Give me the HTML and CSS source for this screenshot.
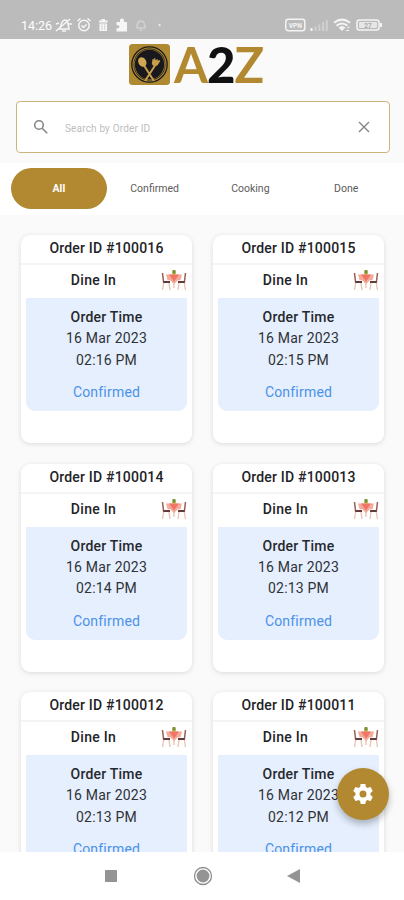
FILE: index.html
```html
<!DOCTYPE html>
<html lang="en">
<head>
<meta charset="utf-8">
<title>A2Z Orders</title>
<link rel="stylesheet" href="styles.css">
</head>
<body>
<svg class="defs" width="0" height="0">
  <symbol id="table" viewBox="0 0 26 22">
    <path d="M1.500 4l1.200 10M24.500 4l-1.200 10" stroke="#995f55" stroke-width="1.500" fill="none"/>
    <path d="M2.500 13h6.500M17 13h6.500" stroke="#633b37" stroke-width="2"/>
    <path d="M2.700 14L1.500 21M8 14l1 7M18 14l-1 7M23.300 14l1.200 7M13 13v6" stroke="#e8c3ae" stroke-width="1.300" fill="none"/>
    <path d="M5 5.500h16l-1.500 5.500-3 .5-3.500 3.500-3.500-3.500-3-.5z" fill="#f4aa98"/>
    <path d="M8 5.500h10l-5 7z" fill="#ef7567"/>
    <rect x="11.300" y="1" width="3.400" height="4.200" rx="1" fill="#7d9135"/>
    <path d="M11.500 5.200h3" stroke="#e2a13c" stroke-width="1.200"/>
  </symbol>
</svg>
<div class="phone">
  <header class="status">
    <span class="clock">14:26</span>
    <svg class="sys-left" width="110" height="18" viewBox="0 0 110 18" fill="none" stroke="#f6f6f6" stroke-width="1.500">
      <path d="M4 13c3-2 1-8 6-9 3 0 3 4 4 9zM7 15h4M1 15L15 3M1 8l3-1M13 8h4"/>
      <circle cx="29" cy="9.500" r="5.200"/><path d="M22.500 5l3-2.500M35.500 5l-3-2.500M26.500 9.500l2 2 3-3"/>
      <path d="M44 5.500h8.500M46.500 4h3.500" stroke-width="1.800"/><path d="M44.500 7.500h7.500v7.500h-7.500z" fill="#f6f6f6" stroke="none"/><path d="M47 8v6M49.700 8v6" stroke="#bbb" stroke-width=".6"/>
      <path d="M61.500 6h3.500q-.5-3.500 2-3.500t2 3.500h3v9.500h-10.500v-3q3-.2 3-1.800t-3-1.800z" fill="#f6f6f6" stroke="none"/>
      <path d="M82 12c0-5 1-7 4-7s4 2 4 7z" stroke="#d2d2d2"/><path d="M84.500 14h3" stroke="#d2d2d2"/>
      <circle cx="104.500" cy="9" r="1.200" fill="#e4e4e4" stroke="none"/>
    </svg>
    <svg class="sys-right" width="100" height="16" viewBox="0 0 100 16" fill="none" stroke="#f4f4f4">
      <rect x="1.800" y="2.200" width="19" height="11.600" rx="2.500" stroke-width="1.500"/>
      <text x="11.300" y="10.800" class="micro">VPN</text>
      <path d="M27.500 14v-3" stroke-width="2"/><path d="M31.500 14V9.500M35.300 14V7.500M39.100 14V5M42.700 14V3" stroke="#d0d0d0" stroke-width="2"/>
      <path d="M50 5.800q8-6.400 16 0M52.500 8.800q5.500-4.600 11 0" stroke-width="2"/><path d="M54.500 10.500q3.500-3 7 0L58 14z" fill="#f4f4f4" stroke="none"/><path d="M62 13.500h3M63.500 11l2-1" stroke-width="1.200"/>
      <rect x="73" y="3" width="22" height="10" rx="2.500" stroke-width="1.500"/><path d="M97 6v4" stroke-width="2"/><rect x="75" y="5" width="18" height="6" rx="1" fill="#e6e6e6" stroke="none"/>
      <text x="84" y="10.500" class="micro grey">27</text>
    </svg>
  </header>

  <main class="app">
    <div class="brand">
      <svg width="41" height="41" viewBox="0 0 41 41">
        <rect width="41" height="41" rx="3.500" fill="#b08a32"/>
        <circle cx="20.500" cy="20.500" r="16.800" fill="none" stroke="#19191d" stroke-width="3"/>
        <circle cx="20.500" cy="20.500" r="14.700" fill="#19191d"/>
        <circle cx="20.500" cy="20.500" r="16.500" fill="none" stroke="#b08a32" stroke-width="1.100"/>
        <path d="M14 20l11 17M27 20L16 37" stroke="#c69d4a" stroke-width="2" fill="none"/>
        <ellipse cx="13.300" cy="18" rx="3.900" ry="5" transform="rotate(-30 13.300 18)" fill="#d2a754"/>
        <path d="M23.500 15l-.7 5q2 3.500 5.500 1.500l3-4.500" fill="#c69d4a"/>
        <path d="M24 19.500l2-5.500M26 20.500l2.300-5.500M28 21l2.500-5" stroke="#c69d4a" stroke-width="1"/>
      </svg>
      <span class="wordmark">A<b>2</b>Z</span>
    </div>

    <div class="search">
      <svg width="16" height="16" viewBox="0 0 16 16" fill="none" stroke="#858585" stroke-width="1.600"><circle cx="6" cy="6" r="4.300"/><path d="M9.200 9.200l5 5"/></svg>
      <span class="hint">Search by Order ID</span>
      <svg width="12" height="12" viewBox="0 0 12 12" stroke="#858585" stroke-width="1.400"><path d="M1 1l10 10M11 1L1 11"/></svg>
    </div>

    <nav class="tabs">
      <span class="tab active">All</span><span class="tab">Confirmed</span><span class="tab">Cooking</span><span class="tab">Done</span>
    </nav>

    <section class="orders">
      <article class="card"><h2>Order ID #100016</h2><div class="kind"><span>Dine In</span><svg><use href="#table"/></svg></div><div class="info"><h3>Order Time</h3><p>16 Mar 2023</p><p>02:16 PM</p><p class="state">Confirmed</p></div></article>
      <article class="card"><h2>Order ID #100015</h2><div class="kind"><span>Dine In</span><svg><use href="#table"/></svg></div><div class="info"><h3>Order Time</h3><p>16 Mar 2023</p><p>02:15 PM</p><p class="state">Confirmed</p></div></article>
      <article class="card"><h2>Order ID #100014</h2><div class="kind"><span>Dine In</span><svg><use href="#table"/></svg></div><div class="info"><h3>Order Time</h3><p>16 Mar 2023</p><p>02:14 PM</p><p class="state">Confirmed</p></div></article>
      <article class="card"><h2>Order ID #100013</h2><div class="kind"><span>Dine In</span><svg><use href="#table"/></svg></div><div class="info"><h3>Order Time</h3><p>16 Mar 2023</p><p>02:13 PM</p><p class="state">Confirmed</p></div></article>
      <article class="card"><h2>Order ID #100012</h2><div class="kind"><span>Dine In</span><svg><use href="#table"/></svg></div><div class="info"><h3>Order Time</h3><p>16 Mar 2023</p><p>02:13 PM</p><p class="state">Confirmed</p></div></article>
      <article class="card"><h2>Order ID #100011</h2><div class="kind"><span>Dine In</span><svg><use href="#table"/></svg></div><div class="info"><h3>Order Time</h3><p>16 Mar 2023</p><p>02:12 PM</p><p class="state">Confirmed</p></div></article>
    </section>

    <div class="fab">
      <svg width="24" height="24" viewBox="0 0 24 24" fill="#fff"><path d="M19.430 12.980c.04-.32.07-.64.07-.98s-.03-.66-.07-.98l2.110-1.650c.19-.15.24-.42.12-.64l-2-3.460c-.12-.22-.39-.3-.61-.22l-2.490 1c-.52-.4-1.080-.73-1.690-.98l-.38-2.650C14.460 2.180 14.250 2 14 2h-4c-.25 0-.46.18-.49.42l-.38 2.650c-.61.25-1.170.59-1.690.98l-2.490-1c-.23-.09-.49 0-.61.22l-2 3.460c-.13.22-.07.49.12.64l2.110 1.650c-.04.32-.07.65-.07.98s.03.66.07.98l-2.110 1.650c-.19.15-.24.42-.12.64l2 3.460c.12.22.39.3.61.22l2.490-1c.52.4 1.080.73 1.690.98l.38 2.650c.03.24.24.42.49.42h4c.25 0 .46-.18.49-.42l.38-2.650c.61-.25 1.170-.59 1.690-.98l2.490 1c.23.09.49 0 .61-.22l2-3.460c.12-.22.07-.49-.12-.64zM12 15.500A3.500 3.500 0 1 1 12 8.500a3.500 3.500 0 0 1 0 7z"/></svg>
    </div>
  </main>

  <footer class="navbar">
    <svg width="12" height="12" viewBox="0 0 12 12"><rect width="12" height="12" rx=".5" fill="#949494"/></svg>
    <svg width="20" height="20" viewBox="0 0 20 20"><circle cx="10" cy="10" r="8.500" fill="none" stroke="#8e8e8e" stroke-width="1.300"/><circle cx="10" cy="10" r="6.400" fill="#949494"/></svg>
    <svg width="13" height="14" viewBox="0 0 13 14"><path d="M13 0v14L0 7z" fill="#949494"/></svg>
  </footer>
</div>
</body>
</html>
```
FILE: styles.css
```css
* { box-sizing: border-box; }
body { margin: 0; font-family: Roboto, "Liberation Sans", sans-serif; color: #303237; background: #fff; }
h2, h3, p { margin: 0; }
svg { display: block; flex: none; }
.defs { position: absolute; }
.phone { width: 404px; height: 900px; display: flex; flex-direction: column; overflow: hidden; }

.status { height: 39px; flex: none; background: #bbb; display: flex; align-items: flex-start; padding: 17px 20px 0 21px; }
.clock { color: #fff; font-size: 12.500px; line-height: 17px; width: 34px; }
.sys-left { margin-top: -1px; }
.sys-right { margin: 0 0 0 auto; }
.micro { font-size: 6.500px; font-weight: 700; text-anchor: middle; fill: #f4f4f4; stroke: none; }
.grey { fill: #aaa; }

.app { position: relative; height: 813px; flex: none; overflow: hidden; background: #fafafa; }
.brand { height: 62px; padding: 5px 0 0 129px; display: flex; align-items: flex-start; }
.wordmark { font: 700 49px/41px Lato, sans-serif; color: #b28930; margin-left: 4px; letter-spacing: -1px; }
.wordmark b { color: #111; }

.search { height: 52px; margin: 0 14px 0 16px; padding: 0 19px 0 16px; border: 1.500px solid #cdb47c; border-radius: 4px; background: #fff; display: flex; align-items: center; }
.hint { flex: 1; margin-left: 16px; padding-top: 3px; font-size: 10px; letter-spacing: .17px; color: #bdbdbd; }

.tabs { height: 52px; margin-top: 10px; padding: 5px 10px 6px 11px; background: #fff; display: grid; grid-template-columns: repeat(4, 1fr); }
.tab { display: flex; align-items: center; justify-content: center; font-size: 10.500px; color: #5c5c5c; }
.tab.active { background: #b28930; color: #fff; font-weight: 700; border-radius: 21px; }

.orders { display: grid; grid-template-columns: 171px 171px; grid-auto-rows: 208px; gap: 20.500px 21px; padding: 20px 20px 0 21px; }
.card { background: #fff; border-radius: 9px; box-shadow: 0 1px 5px rgba(0, 0, 0, .13); text-align: center; }
.card h2 { height: 30px; border-bottom: 2px solid #f4f4f4; font-size: 14px; line-height: 27px; font-weight: 500; letter-spacing: .2px; color: #222327; }
.kind { height: 33px; display: flex; align-items: center; padding: 0 5px 3px; font-size: 14px; font-weight: 500; letter-spacing: .3px; color: #222327; }
.kind span { flex: 1; }
.kind svg { width: 26px; height: 22px; }
.info { height: 113px; margin: 0 5px; padding-top: 8px; border-radius: 1px 1px 9px 9px; background: #e5effe; font-size: 14px; }
.info h3 { font-size: 14px; font-weight: 500; line-height: 22px; letter-spacing: .2px; color: #26282c; }
.info p { line-height: 21.500px; letter-spacing: .2px; }
.info .state { margin-top: 11px; color: #4b92e8; }

.fab { position: absolute; left: 337px; top: 729px; width: 52px; height: 52px; border-radius: 50%; background: #b28930; box-shadow: 0 4px 7px rgba(0, 0, 0, .27); display: flex; align-items: center; justify-content: center; }

.navbar { flex: 1; background: #fff; display: flex; align-items: center; padding: 0 0 0 105px; }
.navbar svg:nth-child(2) { margin: 0 74px 0 76px; }
```
